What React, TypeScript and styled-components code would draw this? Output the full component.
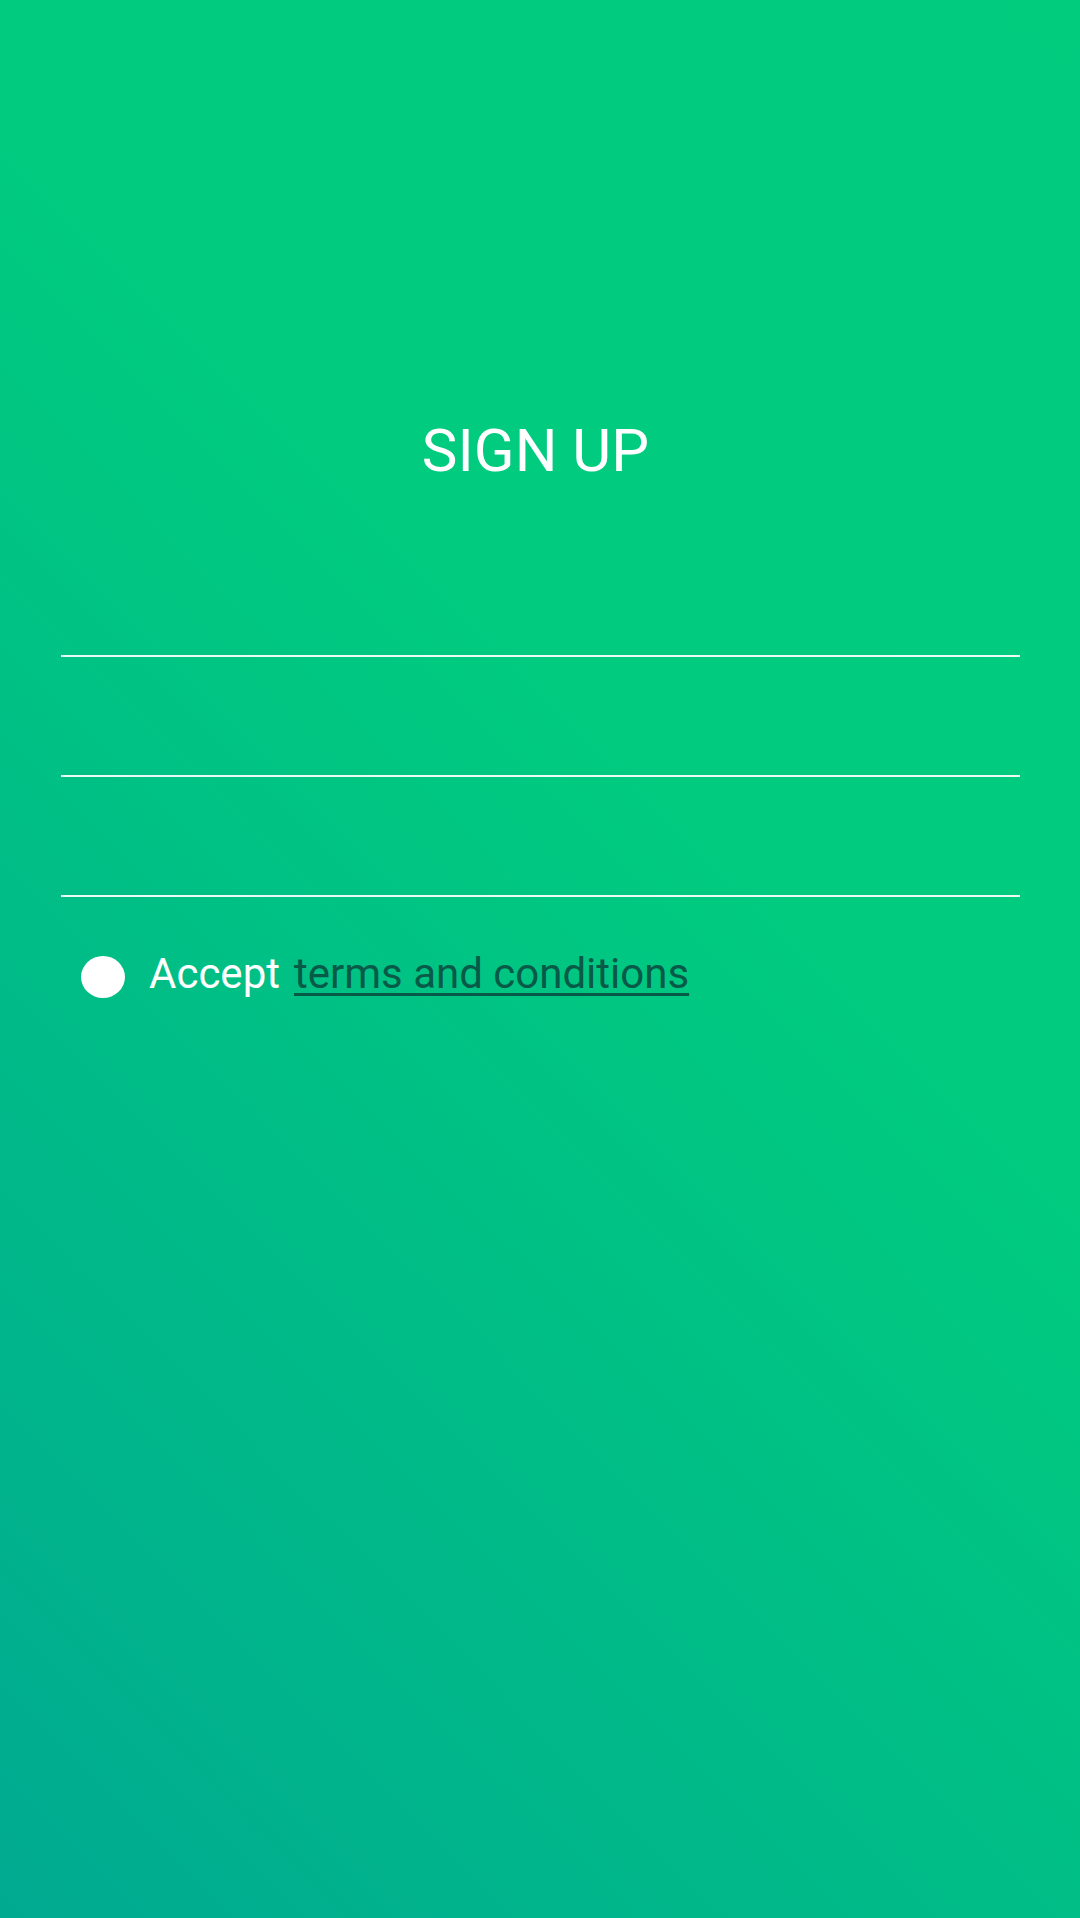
import React from "react";
import styled, { createGlobalStyle } from "styled-components";

const GlobalStyle = createGlobalStyle`
  html, body {
    margin: 0;
    padding: 0;
    height: 100%;
  }
  body {
    font-family: Roboto, "Liberation Sans", Arial, sans-serif;
  }
  #root {
    min-height: 100%;
  }
  * {
    box-sizing: border-box;
  }
`;

const Screen = styled.main`
  width: 100%;
  min-height: 1918px;
  background: linear-gradient(45deg, #00aa91 0%, #00cb7f 60%, #01cc7e 100%);
  padding: 416px 60px 0 61px;
  display: flex;
  flex-direction: column;
`;

const Title = styled.h1`
  margin: 0;
  padding-right: 10px;
  font-family: Roboto, "Liberation Sans", Arial, sans-serif;
  font-weight: 400;
  font-size: 60px;
  line-height: 70px;
  color: #ffffff;
  text-align: center;
  letter-spacing: 0;
`;

const Form = styled.form`
  margin-top: 51px;
  display: flex;
  flex-direction: column;
`;

const Field = styled.input`
  display: block;
  width: 100%;
  height: 120px;
  margin: 0;
  padding: 0 20px;
  background: transparent;
  border: none;
  border-bottom: 2px solid rgba(255, 255, 255, 0.92);
  outline: none;
  color: #ffffff;
  font-family: Roboto, "Liberation Sans", Arial, sans-serif;
  font-size: 42px;
`;

const TermsRow = styled.label`
  margin-top: 52px;
  padding-left: 20px;
  display: flex;
  align-items: center;
  gap: 24px;
  font-family: Roboto, "Liberation Sans", Arial, sans-serif;
  font-size: 42px;
  line-height: 49px;
  color: #ffffff;
`;

const Dot = styled.span`
  flex: 0 0 auto;
  width: 44px;
  height: 42px;
  border-radius: 50%;
  background: #ffffff;
  margin-top: 6px;
`;

const Text = styled.span`
  display: inline-flex;
  gap: 14px;
`;

const TermsLink = styled.a`
  color: #065a47;
  text-decoration: underline;
  text-decoration-thickness: 3px;
  text-underline-offset: 5px;
  cursor: pointer;
`;

export default function App() {
  return (
    <>
      <GlobalStyle />
      <Screen>
        <Title>SIGN UP</Title>
        <Form onSubmit={(e) => e.preventDefault()}>
          <Field type="text" aria-label="Name" />
          <Field type="email" aria-label="Email" />
          <Field type="password" aria-label="Password" />
          <TermsRow>
            <Dot />
            <Text>
              <span>Accept</span>
              <TermsLink>terms and conditions</TermsLink>
            </Text>
          </TermsRow>
        </Form>
      </Screen>
    </>
  );
}
